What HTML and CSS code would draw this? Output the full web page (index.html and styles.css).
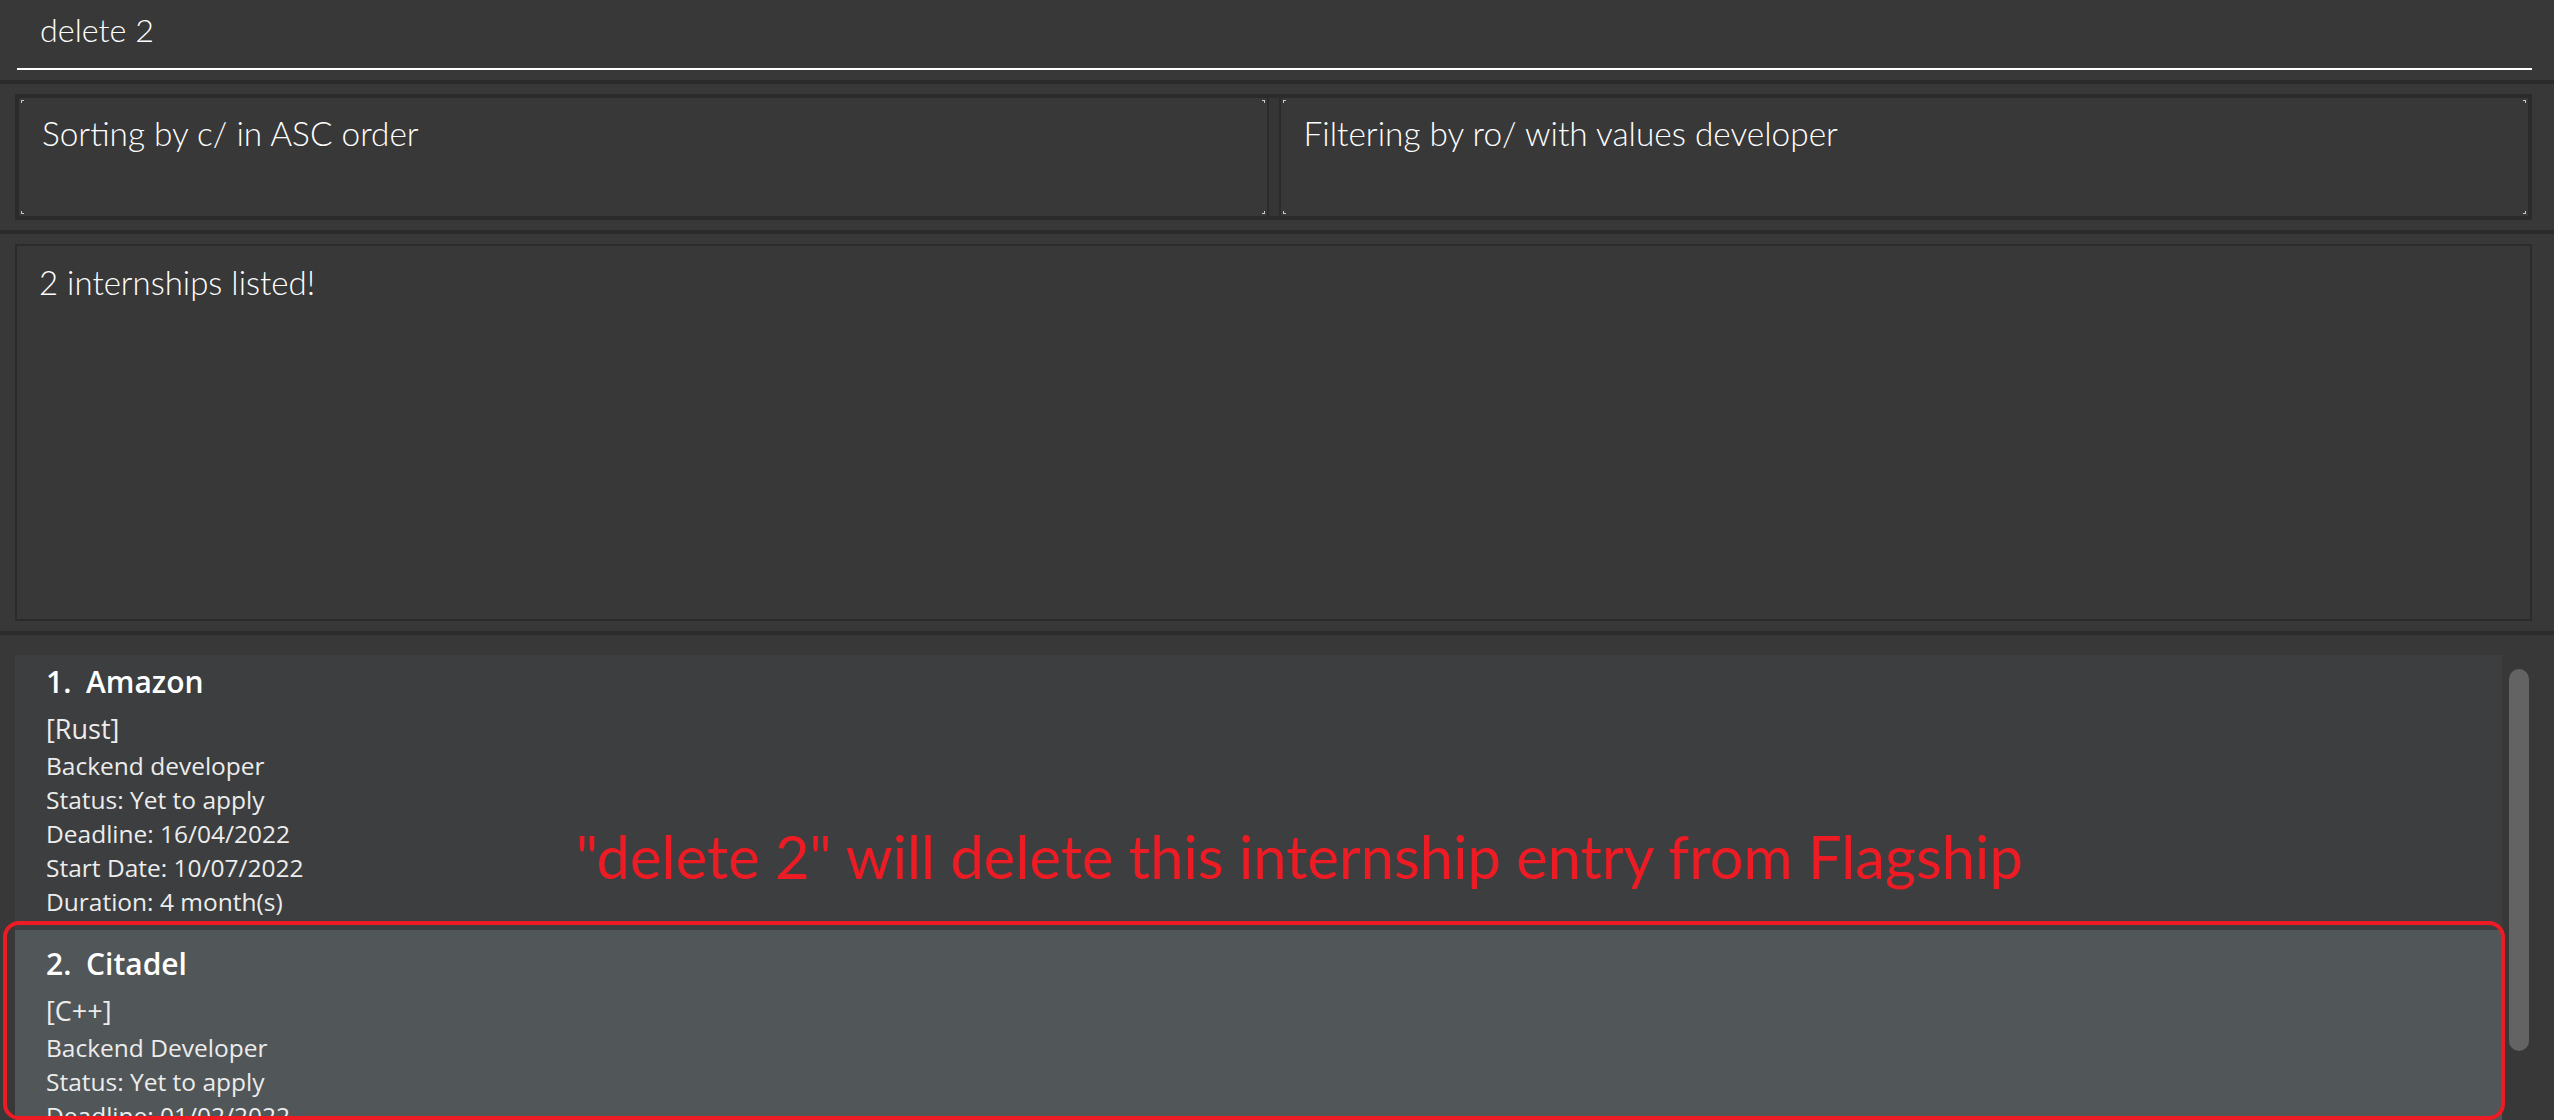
FILE: index.html
```html
<!DOCTYPE html>
<html>
<head>
<meta charset="utf-8">
<link rel="stylesheet" href="styles.css">
</head>
<body>
<div class="app">
  <div class="command-box"><div class="command-field">delete 2</div></div>
  <div class="stripe"></div>
  <div class="status-row">
    <div class="split">
      <div class="pane">Sorting by c/ in ASC order</div>
      <div class="split-divider"></div>
      <div class="pane">Filtering by ro/ with values developer</div>
    </div>
  </div>
  <div class="stripe"></div>
  <div class="result-row"><div class="result-box">2 internships listed!</div></div>
  <div class="stripe"></div>
  <div class="list-area">
    <div class="list">
      <div class="card card-even">
        <div class="card-title"><span class="card-id">1.</span><span class="card-name">Amazon</span></div>
        <div class="card-tags">[Rust]</div>
        <div class="card-line">Backend developer</div>
        <div class="card-line">Status: Yet to apply</div>
        <div class="card-line">Deadline: 16/04/2022</div>
        <div class="card-line">Start Date: 10/07/2022</div>
        <div class="card-line">Duration: 4 month(s)</div>
      </div>
      <div class="card card-odd">
        <div class="card-title"><span class="card-id">2.</span><span class="card-name">Citadel</span></div>
        <div class="card-tags">[C++]</div>
        <div class="card-line">Backend Developer</div>
        <div class="card-line">Status: Yet to apply</div>
        <div class="card-line">Deadline: 01/02/2022</div>
        <div class="card-line">Start Date: 01/06/2022</div>
        <div class="card-line">Duration: 3 month(s)</div>
      </div>
    </div>
    <div class="scrollbar"><div class="thumb"></div></div>
  </div>
  <div class="note">"delete 2" will delete this internship entry from Flagship</div>
  <div class="highlight"></div>
</div>
</body>
</html>
```
FILE: styles.css
```css
* { box-sizing: border-box; margin: 0; padding: 0; }
html, body { width: 2554px; height: 1120px; overflow: hidden; background: #383838; }
body { font-family: "Lato", "Open Sans", sans-serif; color: #ffffff; }
.app { position: relative; display: flex; flex-direction: column; height: 1120px; }

.command-box { flex: none; height: 80px; padding: 0 22px 0 17px; }
.command-field { height: 70px; border-bottom: 2px solid #ffffff; padding-left: 23px; font-weight: 300; font-size: 32.3px; line-height: 60px; white-space: pre; }

.stripe { flex: none; height: 4px; background: #2b2b2b; }

.status-row { flex: none; height: 146px; padding: 10px 22px 10px 15px; }
.split { display: flex; height: 126px; padding: 4px; background: #2b2b2b; }
.pane {
  flex: 1;
  padding: 12px 0 0 23px;
  font-weight: 300; font-size: 33.4px; line-height: 47px; white-space: pre;
  background-color: #383838;
  background-image:
    linear-gradient(#c8c8c8, #c8c8c8), linear-gradient(#c8c8c8, #c8c8c8),
    linear-gradient(#c8c8c8, #c8c8c8), linear-gradient(#c8c8c8, #c8c8c8),
    linear-gradient(#c8c8c8, #c8c8c8), linear-gradient(#c8c8c8, #c8c8c8),
    linear-gradient(#c8c8c8, #c8c8c8), linear-gradient(#c8c8c8, #c8c8c8);
  background-repeat: no-repeat;
  background-size: 3px 1px, 1px 3px, 3px 1px, 1px 3px, 3px 1px, 1px 3px, 3px 1px, 1px 3px;
  background-position:
    left 2px top 2px, left 2px top 2px,
    right 2px top 2px, right 2px top 2px,
    left 2px bottom 2px, left 2px bottom 2px,
    right 2px bottom 2px, right 2px bottom 2px;
}
.split-divider { flex: none; width: 14px; padding: 0 2px; background: #353535; background-clip: content-box; }

.result-row { flex: none; height: 397px; padding: 10px 22px 10px 15px; }
.result-box { height: 377px; border: 2px solid #2b2b2b; padding: 13px 0 0 22px; font-weight: 300; font-size: 33px; line-height: 47px; }

.list-area { flex: 1; display: flex; gap: 7px; padding: 20px 25px 0 15px; overflow: hidden; }
.list { flex: 1; display: flex; flex-direction: column; }
.card { flex: none; padding: 12px 31px 11px; color: #ececec; font-family: "Open Sans", "Noto Sans", sans-serif; }
.card-even { background: #3c3e3f; }
.card-odd { background: #515658; padding-top: 19px; }
.card-title { display: flex; font-size: 30px; font-weight: 600; line-height: 30px; color: #ffffff; margin-bottom: 15px; }
.card-id { flex: none; width: 40px; }
.card-tags { font-size: 27px; line-height: 34px; margin-bottom: 3px; }
.card-line { font-size: 24.5px; line-height: 34px; white-space: pre; }

.scrollbar { flex: none; width: 20px; }
.thumb { margin-top: 14px; height: 382px; border-radius: 10px; background: #636363; }

.note { position: absolute; left: 576px; top: 826px; font-family: "Lato", sans-serif; font-size: 59.7px; line-height: 60px; color: #ed1c24; white-space: pre; }
.highlight { position: absolute; left: 3px; top: 921px; width: 2502px; height: 199px; border: 4px solid #ed1c24; border-radius: 16px; }
```
